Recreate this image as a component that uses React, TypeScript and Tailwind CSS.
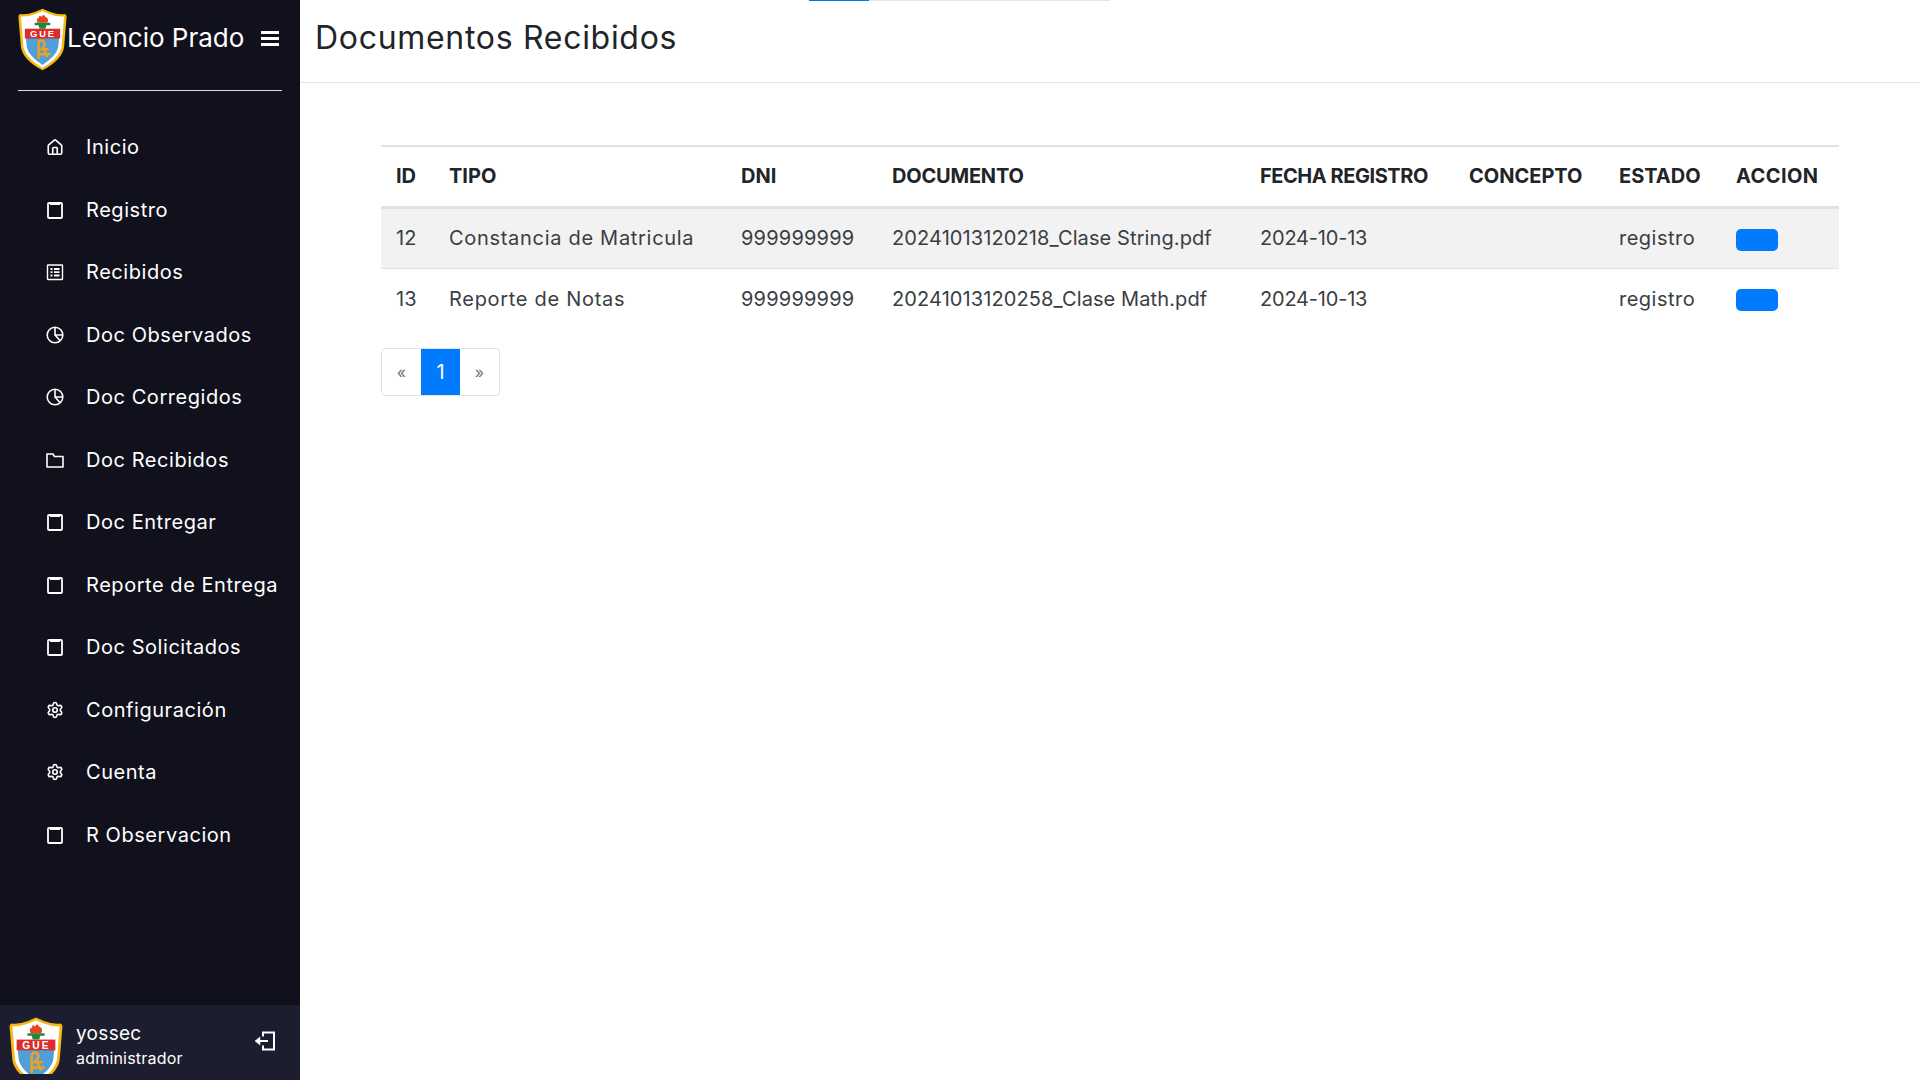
import React from 'react';
import { Home, Settings } from 'lucide-react';

const FONT = "font-['Inter','Liberation_Sans',sans-serif]";

function Logo({ className, viewBox = '0 0 50 64' }: { className: string; viewBox?: string }) {
  return (
    <svg viewBox={viewBox} className={className}>
      <path d="M25 0.5 L33 4 Q41 7 48 6 Q50 7 49.5 10 L47 40 Q45 53 25 63.5 Q5 53 3 40 L0.5 10 Q0 7 2 6 Q9 7 17 4 Z" fill="#f5b90f" />
      <path d="M25 3 L32 6 Q40 9 47 8.5 L44.5 40 Q42 51 25 61 Q8 51 5.5 40 L3 8.5 Q10 9 18 6 Z" fill="#fff" />
      <path d="M8 30 H42 L41 40 Q39 49 25 58 Q11 49 9 40 Z" fill="#4f9fd8" />
      <path d="M20 15 Q18 11 21 10 Q22 6 24 9 Q26 5 28 9 Q32 10 30 15 Z" fill="#e8431f" />
      <path d="M17 15 H33 V17.5 H29 L28 21 H22 L21 17.5 H17 Z" fill="#1c8a3a" />
      <rect x="7" y="21" width="36" height="10" fill="#de2c2c" />
      <text x="25.5" y="29.6" textAnchor="middle" fontSize="9.5" fontWeight="700" letterSpacing="2" fill="#fff" fontFamily="Liberation Sans, sans-serif">GUE</text>
      <path d="M21 52 V37 Q21 33 24 33 Q28 34 27 38 L24 42 H31 M26 42 L30 50 M20 47 H33" stroke="#f0a11c" strokeWidth="2.4" fill="none" />
    </svg>
  );
}

function Clip() {
  return (
    <svg viewBox="0 0 18 18" className="w-[18px] h-[18px]" fill="none" stroke="currentColor" strokeWidth="1.8">
      <rect x="2" y="2" width="14" height="15" rx="1" />
      <path d="M4 1h10v3H4z" fill="currentColor" strokeWidth="0" />
    </svg>
  );
}

function Sheet() {
  return (
    <svg viewBox="0 0 18 18" className="w-[18px] h-[18px]" fill="none" stroke="currentColor" strokeWidth="1.4">
      <rect x="1.5" y="2" width="15" height="14.5" rx="0.5" />
      <path d="M4.5 6h2M8 6h5.5M4.5 9.2h2M8 9.2h5.5M4.5 12.5h2M8 12.5h5.5" strokeWidth="1.8" />
    </svg>
  );
}

function Pie() {
  return (
    <svg viewBox="0 0 18 18" className="w-[18px] h-[18px]" fill="none" stroke="currentColor" strokeWidth="1.6">
      <circle cx="9" cy="9" r="7.8" />
      <path d="M9 1.5V9h7.5M9 9l5 5.5" />
    </svg>
  );
}

function FolderIcon() {
  return (
    <svg viewBox="0 0 18 18" className="w-[18px] h-[18px]" fill="none" stroke="currentColor" strokeWidth="1.6">
      <path d="M1 3h6l1.5 2.5H17V16H1z" strokeLinejoin="round" />
    </svg>
  );
}

function Exit() {
  return (
    <svg viewBox="0 0 22 22" className="w-[22px] h-[22px]" fill="none" stroke="currentColor" strokeWidth="2">
      <path d="M9 6.5V2.5h11v17H9V15.5" />
      <path d="M14 11H5" />
      <path d="M6 7v8l-5-4z" fill="currentColor" strokeWidth="0.5" />
    </svg>
  );
}

const gear = <Settings className="w-[18px] h-[18px]" strokeWidth={2.2} />;

const menu = [
  { label: 'Inicio', icon: <Home className="w-[19px] h-[19px]" strokeWidth={2.2} /> },
  { label: 'Registro', icon: <Clip /> },
  { label: 'Recibidos', icon: <Sheet /> },
  { label: 'Doc Observados', icon: <Pie /> },
  { label: 'Doc Corregidos', icon: <Pie /> },
  { label: 'Doc Recibidos', icon: <FolderIcon /> },
  { label: 'Doc Entregar', icon: <Clip /> },
  { label: 'Reporte de Entrega', icon: <Clip /> },
  { label: 'Doc Solicitados', icon: <Clip /> },
  { label: 'Configuración', icon: gear },
  { label: 'Cuenta', icon: gear },
  { label: 'R Observacion', icon: <Clip /> },
];

const rows = [
  { id: 12, tipo: 'Constancia de Matricula', dni: '999999999', doc: '20241013120218_Clase String.pdf', fecha: '2024-10-13', concepto: '', estado: 'registro' },
  { id: 13, tipo: 'Reporte de Notas', dni: '999999999', doc: '20241013120258_Clase Math.pdf', fecha: '2024-10-13', concepto: '', estado: 'registro' },
];

export default function App() {
  return (
    <div className={`${FONT} relative flex h-screen overflow-hidden bg-white`}>
      <div className="absolute top-0 left-[809px] flex h-px w-[301px] bg-[#e5e5e5]">
        <div className="w-[60px] bg-[#007bdf]" />
      </div>

      <aside className="flex w-[300px] shrink-0 flex-col bg-[#10111c] text-white">
        <div className="mx-[18px] flex h-[91px] items-start border-b border-[#dddddd] pt-[8px]">
          <Logo className="h-[63px] w-[49px] shrink-0" />
          <span className="mt-[14px] text-[26px] leading-[32px] whitespace-nowrap">Leoncio Prado</span>
          <div className="mt-[23px] ml-auto mr-[3px] flex w-[18px] flex-col gap-[3px]">
            <span className="h-[3px] bg-white" />
            <span className="h-[3px] bg-white" />
            <span className="h-[3px] bg-white" />
          </div>
        </div>

        <nav className="flex flex-1 flex-col pt-[25px]">
          {menu.map(item => (
            <a key={item.label} className="flex h-[62.5px] items-center text-[20px] tracking-[0.55px] whitespace-nowrap">
              <span className="ml-[46px] mr-[22px] flex w-[18px] shrink-0 justify-center">{item.icon}</span>
              {item.label}
            </a>
          ))}
        </nav>

        <div className="flex h-[75px] items-start bg-[#1d1d30]">
          <Logo className="ml-[9px] mt-[12px] h-[57px] w-[54px] shrink-0" viewBox="0 0 50 53" />
          <div className="ml-[13px] mt-[16px] flex flex-col">
            <span className="text-[19px] leading-[25px] tracking-[0.3px]">yossec</span>
            <span className="text-[16px] leading-[24px] tracking-[0.2px]">administrador</span>
          </div>
          <span className="mt-[25px] ml-auto mr-[24px]"><Exit /></span>
        </div>
      </aside>

      <main className="flex min-w-0 flex-1 flex-col">
        <header className="flex h-[83px] items-start border-b border-[#e5e5e5] pl-[15px] pt-[17px]">
          <h1 className="text-[32px] leading-[42px] tracking-[0.7px] text-[#212529]">Documentos Recibidos</h1>
        </header>

        <div className="px-[81px] pt-[62px]">
          <table className="w-full table-fixed border-collapse text-[20px] text-[#3a3e43]">
            <thead className="text-[#212529]">
              <tr className="h-[61px] border-t-2 border-b-[3px] border-[#dee2e6] text-left font-bold">
                <th className="w-[53px] pl-[15px]">ID</th>
                <th className="w-[292px] pl-[15px]">TIPO</th>
                <th className="w-[151px] pl-[15px]">DNI</th>
                <th className="w-[368px] pl-[15px] tracking-[-0.2px]">DOCUMENTO</th>
                <th className="w-[209px] pl-[15px] tracking-[-0.45px]">FECHA REGISTRO</th>
                <th className="w-[150px] pl-[15px]">CONCEPTO</th>
                <th className="w-[117px] pl-[15px]">ESTADO</th>
                <th className="pl-[15px] tracking-[0.4px]">ACCION</th>
              </tr>
            </thead>
            <tbody>
              {rows.map((r, i) => (
                <tr key={r.id} className={i === 0 ? 'h-[61px] border-b border-[#dee2e6] bg-[#f2f2f2]' : 'h-[61px]'}>
                  <td className="pl-[15px]">{r.id}</td>
                  <td className="pl-[15px] tracking-[0.7px]">{r.tipo}</td>
                  <td className="pl-[15px] tracking-[0.2px]">{r.dni}</td>
                  <td className="pl-[15px] tracking-[0.1px] whitespace-nowrap">{r.doc}</td>
                  <td className="pl-[15px] tracking-[-0.2px]">{r.fecha}</td>
                  <td className="pl-[15px]">{r.concepto}</td>
                  <td className="pl-[15px] tracking-[0.5px]">{r.estado}</td>
                  <td className="pl-[15px]">
                    <button className="mt-[3px] block h-[22px] w-[42px] rounded-[5px] bg-[#007bff]" />
                  </td>
                </tr>
              ))}
            </tbody>
          </table>

          <div className="mt-[19px] flex h-[48px] w-[119px] overflow-hidden rounded-[4px] border border-[#dee2e6] text-[#6c757d]">
            <span className="flex w-[39px] items-center justify-center text-[16px]">«</span>
            <span className="flex w-[39px] items-center justify-center bg-[#007bff] text-[20px] text-white">1</span>
            <span className="flex w-[39px] items-center justify-center text-[16px]">»</span>
          </div>
        </div>
      </main>
    </div>
  );
}
